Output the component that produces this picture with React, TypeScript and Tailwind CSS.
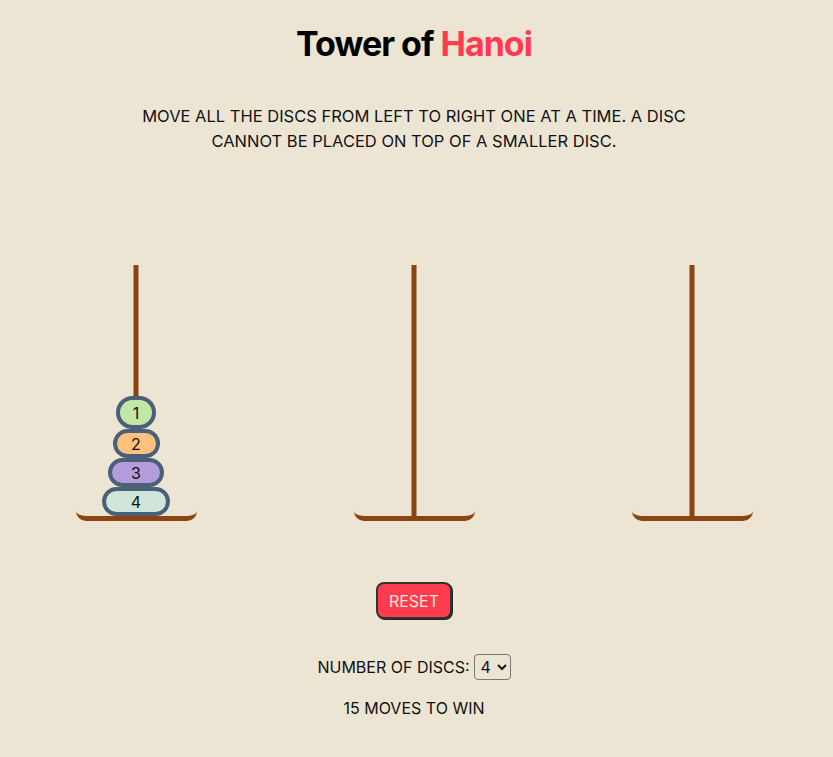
import { useState } from 'react'

const discs = [
  { n: 1, w: 40, h: 33, color: 'bg-[#c3e7a7]' },
  { n: 2, w: 47, h: 29, color: 'bg-[#ffc17c]' },
  { n: 3, w: 56, h: 29, color: 'bg-[#b29cdb]' },
  { n: 4, w: 68, h: 29, color: 'bg-[#d0e6da]' },
]

function Peg({ children }: { children?: React.ReactNode }) {
  return (
    <div className="w-[278px] flex flex-col items-center">
      <div className="relative h-[251px] w-[120px] flex flex-col items-center justify-end">
        {/* Pole */}
        <div className="absolute top-0 bottom-0 left-1/2 -translate-x-1/2 w-[5px] bg-[#8b4513]" />
        <div className="relative flex flex-col items-center">{children}</div>
      </div>
      <div className="-mt-[5px] w-[121px] h-[10px] border-b-[5px] border-[#8b4513] rounded-b-[10px]" />
    </div>
  )
}

export default function App() {
  const [count, setCount] = useState(4)
  const shown = discs.slice(0, count)

  return (
    <div
      className="min-h-[757px] pr-[5px] bg-[#ece5d4] text-[#111] flex flex-col items-center"
      style={{ fontFamily: 'Inter, "Noto Sans", sans-serif' }}
    >
      <h1 className="mt-[22px] text-[34px] font-bold tracking-[-1px] leading-[44px] text-black">
        Tower of <span className="text-[#ff3b4f]">Hanoi</span>
      </h1>

      <p className="mt-[38px] text-center uppercase text-[16.5px] leading-[25px]">
        Move all the discs from left to right one at a time. A disc
        <br />
        cannot be placed on top of a smaller disc.
      </p>

      <div className="mt-[111px] w-[834px] shrink-0 flex">
        <Peg>
          {shown.map(d => (
            <div
              key={d.n}
              className={`${d.color} flex items-center justify-center border-4 border-[#4a5f78] rounded-full text-[16px] leading-none`}
              style={{ width: d.w, height: d.h }}
            >
              {d.n}
            </div>
          ))}
        </Peg>
        <Peg />
        <Peg />
      </div>

      <button className="mt-[61px] w-[76px] h-[37px] bg-[#ff3b4f] text-[#f6e7d9] text-[16px] uppercase border-2 border-[#333] rounded-[8px] shadow-[1px_1px_0_#222]">
        Reset
      </button>

      <div className="mt-[35px] flex items-center gap-[4px] text-[16px] uppercase">
        <span>Number of discs:</span>
        <select
          value={count}
          onChange={e => setCount(Number(e.target.value))}
          className="h-[26px] px-[2px] text-[16px] bg-transparent border border-[#777] rounded-[4px]"
        >
          {[1, 2, 3, 4].map(n => (
            <option key={n} value={n}>
              {n}
            </option>
          ))}
        </select>
      </div>

      <p className="mt-[16px] text-[16px] uppercase">{Math.pow(2, count) - 1} moves to win</p>
    </div>
  )
}
